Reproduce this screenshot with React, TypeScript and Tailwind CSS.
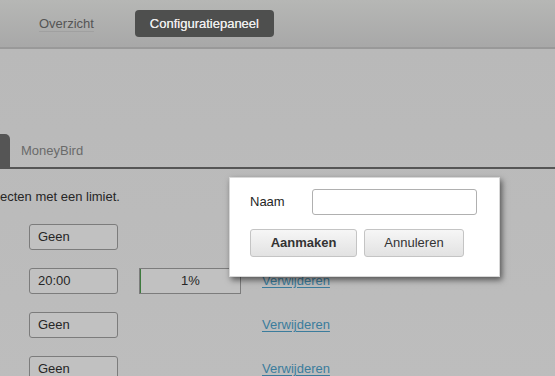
import React from "react";

const font = { fontFamily: '"Liberation Sans", Arial, sans-serif' };

function Field({ value }: { value: string }) {
  return (
    <div className="w-[89px] h-[26px] border border-[#7c7c7c] rounded-[3px] bg-[#c1c1c1] flex items-center pl-[8px] text-[13px] text-[#262626]">
      {value}
    </div>
  );
}

function Link() {
  return (
    <span className="text-[13px] text-[#3b7c9c] underline underline-offset-[2px] decoration-[#3b7c9c]">
      Verwijderen
    </span>
  );
}

export default function App() {
  return (
    <div className="relative w-[555px] h-[376px] overflow-hidden bg-[#bdbdbd]" style={font}>
      {/* header */}
      <div className="h-[49px] bg-gradient-to-b from-[#b6b7b5] to-[#a8a8a8] border-b-2 border-[#999999] flex items-center">
        <span className="ml-[39px] text-[13px] text-[#555555] underline decoration-[#a0a0a0] underline-offset-[3px]">
          Overzicht
        </span>
        <div className="ml-[41px] w-[139px] h-[27px] rounded-[4px] bg-[#4e4f4e] flex items-center justify-center text-[13px] text-[#ececec] [text-shadow:0_0_0.4px_#ececec]">
          Configuratiepaneel
        </div>
      </div>

      {/* body */}
      <div className="bg-gradient-to-b from-[#b9b9b9] to-[#bdbdbd] pt-[86px]">
        <div className="flex items-end h-[34px] border-b-2 border-[#555555]">
          <div className="w-[10px] h-[33px] bg-[#555555] rounded-tr-[5px]" />
          <div className="ml-[11px] h-[33px] flex items-center text-[13px] text-[#6a6a6a]">MoneyBird</div>
        </div>
        <div className="pt-[20px] text-[13px] text-[#262626] leading-[16px]">ecten met een limiet.</div>

        <div className="mt-[19px] flex flex-col gap-[18px] pl-[29px]">
          <div className="flex items-center h-[26px]">
            <Field value="Geen" />
          </div>
          <div className="flex items-center h-[26px]">
            <Field value="20:00" />
            <div className="ml-[21px] w-[102px] h-[26px] border border-[#7c7c7c] flex items-center bg-[#c1c1c1]">
              <div className="w-[1px] h-full bg-[#3d7a3d]" />
              <div className="flex-1 text-center text-[13px] text-[#262626]">1%</div>
            </div>
            <div className="ml-[21px] -mt-[3px]"><Link /></div>
          </div>
          <div className="flex items-center h-[26px]">
            <Field value="Geen" />
            <div className="ml-[144px] -mt-[2px]"><Link /></div>
          </div>
          <div className="flex items-center h-[26px]">
            <Field value="Geen" />
            <div className="ml-[144px] -mt-[2px]"><Link /></div>
          </div>
        </div>
      </div>

      {/* modal */}
      <div className="absolute left-[229px] top-[177px] w-[271px] h-[100px] bg-white border border-[#d8d8d8] shadow-[2px_3px_6px_rgba(0,0,0,0.55)] px-[20px] pt-[11px]">
        <div className="flex items-center h-[26px]">
          <span className="text-[13px] text-[#262626] w-[62px]">Naam</span>
          <div className="w-[165px] h-[26px] border border-[#b0b0b0] rounded-[3px] bg-white" />
        </div>
        <div className="flex gap-[7px] mt-[14px]">
          <div className="w-[107px] h-[28px] rounded-[3px] border border-[#c4c4c4] bg-gradient-to-b from-[#f6f6f6] to-[#e2e2e2] flex items-center justify-center text-[13px] font-bold text-[#333333]">
            Aanmaken
          </div>
          <div className="w-[100px] h-[28px] rounded-[3px] border border-[#c4c4c4] bg-gradient-to-b from-[#f6f6f6] to-[#e2e2e2] flex items-center justify-center text-[13px] text-[#333333]">
            Annuleren
          </div>
        </div>
      </div>
    </div>
  );
}
